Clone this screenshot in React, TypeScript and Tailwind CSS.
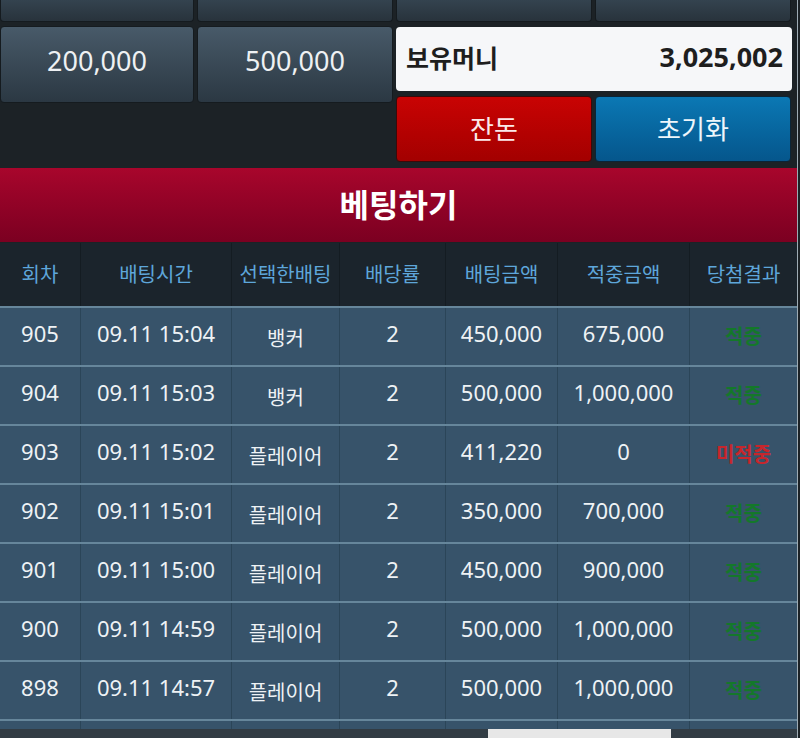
const rows = [
  { no: "905", time: "09.11 15:04", pick: "뱅커", odds: "2", bet: "450,000", win: "675,000", hit: true },
  { no: "904", time: "09.11 15:03", pick: "뱅커", odds: "2", bet: "500,000", win: "1,000,000", hit: true },
  { no: "903", time: "09.11 15:02", pick: "플레이어", odds: "2", bet: "411,220", win: "0", hit: false },
  { no: "902", time: "09.11 15:01", pick: "플레이어", odds: "2", bet: "350,000", win: "700,000", hit: true },
  { no: "901", time: "09.11 15:00", pick: "플레이어", odds: "2", bet: "450,000", win: "900,000", hit: true },
  { no: "900", time: "09.11 14:59", pick: "플레이어", odds: "2", bet: "500,000", win: "1,000,000", hit: true },
  { no: "898", time: "09.11 14:57", pick: "플레이어", odds: "2", bet: "500,000", win: "1,000,000", hit: true },
]

const headers = ["회차", "배팅시간", "선택한배팅", "배당률", "배팅금액", "적중금액", "당첨결과"]

const cols = "grid grid-cols-[81px_151px_108px_106px_112px_132px_107px]"
const numCell = "flex items-center justify-center text-[22px] pb-[7px] border-r border-[#2b4558]"

function ChipButton({ label }: { label?: string }) {
  return (
    <div className="h-[77px] pb-[7px] rounded-[4px] border border-[#151b1f] bg-gradient-to-b from-[#485a69] to-[#2b3843] flex items-center justify-center text-[27px] text-[#eef1f3]">
      {label}
    </div>
  )
}

export default function App() {
  return (
    <div
      className="w-[800px] h-[738px] overflow-hidden bg-[#1c2226] flex items-start"
      style={{ fontFamily: '"Noto Sans", "Noto Sans CJK KR", sans-serif' }}
    >
      <div className="w-[797px] shrink-0">
        {/* top chip rows */}
        <div className="grid grid-cols-[194px_196px_196px_196px] gap-[3px]">
          {[0, 1, 2, 3].map((i) => (
            <div
              key={i}
              className="h-[22px] rounded-b-[4px] border border-t-0 border-[#151b1f] bg-gradient-to-b from-[#34434f] to-[#28333c]"
            />
          ))}
        </div>

        <div className="flex">
          <div className="w-[393px] grid grid-cols-[194px_196px] gap-[3px] mt-[4px] self-start">
            <ChipButton label="200,000" />
            <ChipButton label="500,000" />
          </div>
          <div className="w-[396px] ml-[3px] flex flex-col">
            <div className="mt-[5px] h-[64px] rounded-[4px] bg-[#f6f7f9] flex items-center justify-between pl-[10px] pr-[9px] text-[#1e1e1e] font-bold">
              <span className="text-[25px]">보유머니</span>
              <span className="text-[27px] pb-[4px]">3,025,002</span>
            </div>
            <div className="mt-[5px] grid grid-cols-[196px_196px] gap-[3px]">
              <div className="h-[66px] rounded-[4px] border border-[#3a0a0a] bg-gradient-to-b from-[#c90303] to-[#a30000] flex items-center justify-center text-[26px] text-[#fbe9ea]">
                잔돈
              </div>
              <div className="h-[66px] rounded-[4px] border border-[#0b2436] bg-gradient-to-b from-[#0b78b4] to-[#05568c] flex items-center justify-center text-[26px] text-[#eef6fb]">
                초기화
              </div>
            </div>
          </div>
        </div>

        {/* banner */}
        <div className="mt-[6px] h-[74px] bg-gradient-to-b from-[#a8062c] to-[#7b0021] flex items-center justify-center text-[32px] font-bold text-white">
          베팅하기
        </div>

        {/* table */}
        <div className="mt-[1px]">
          <div className={`${cols} h-[63px] bg-[#1b242c]`}>
            {headers.map((h) => (
              <div
                key={h}
                className="flex items-center justify-center text-[20px] text-[#5ea6da] border-r border-[#141c22] last:border-r-0"
              >
                {h}
              </div>
            ))}
          </div>
          {rows.map((r) => (
            <div key={r.no} className={`${cols} h-[59px] bg-[#37536a] border-t-2 border-[#66869b] text-[#eef2f5]`}>
              <div className={numCell}>{r.no}</div>
              <div className={numCell}>{r.time}</div>
              <div className="flex items-center justify-center text-[20px] pt-[4px] border-r border-[#2b4558]">{r.pick}</div>
              <div className={numCell}>{r.odds}</div>
              <div className={numCell}>{r.bet}</div>
              <div className={numCell}>{r.win}</div>
              <div
                className={`flex items-center justify-center text-[20px] font-bold ${
                  r.hit ? "text-[#14782a]" : "text-[#c7262c]"
                }`}
              >
                {r.hit ? "적중" : "미적중"}
              </div>
            </div>
          ))}
          <div className={`${cols} h-[10px] bg-[#37536a] border-t-2 border-[#66869b]`}>
            {headers.map((h) => (
              <div key={h} className="border-r border-[#2b4558] last:border-r-0" />
            ))}
          </div>
          <div className="h-[20px] bg-[#323c44] flex">
            <div className="ml-[488px] w-[183px] h-full bg-[#e7e7e7]" />
          </div>
        </div>
      </div>
      <div className="w-[3px] h-full shrink-0 bg-[#1c2226] border-l border-[#9eabb4]" />
    </div>
  )
}
